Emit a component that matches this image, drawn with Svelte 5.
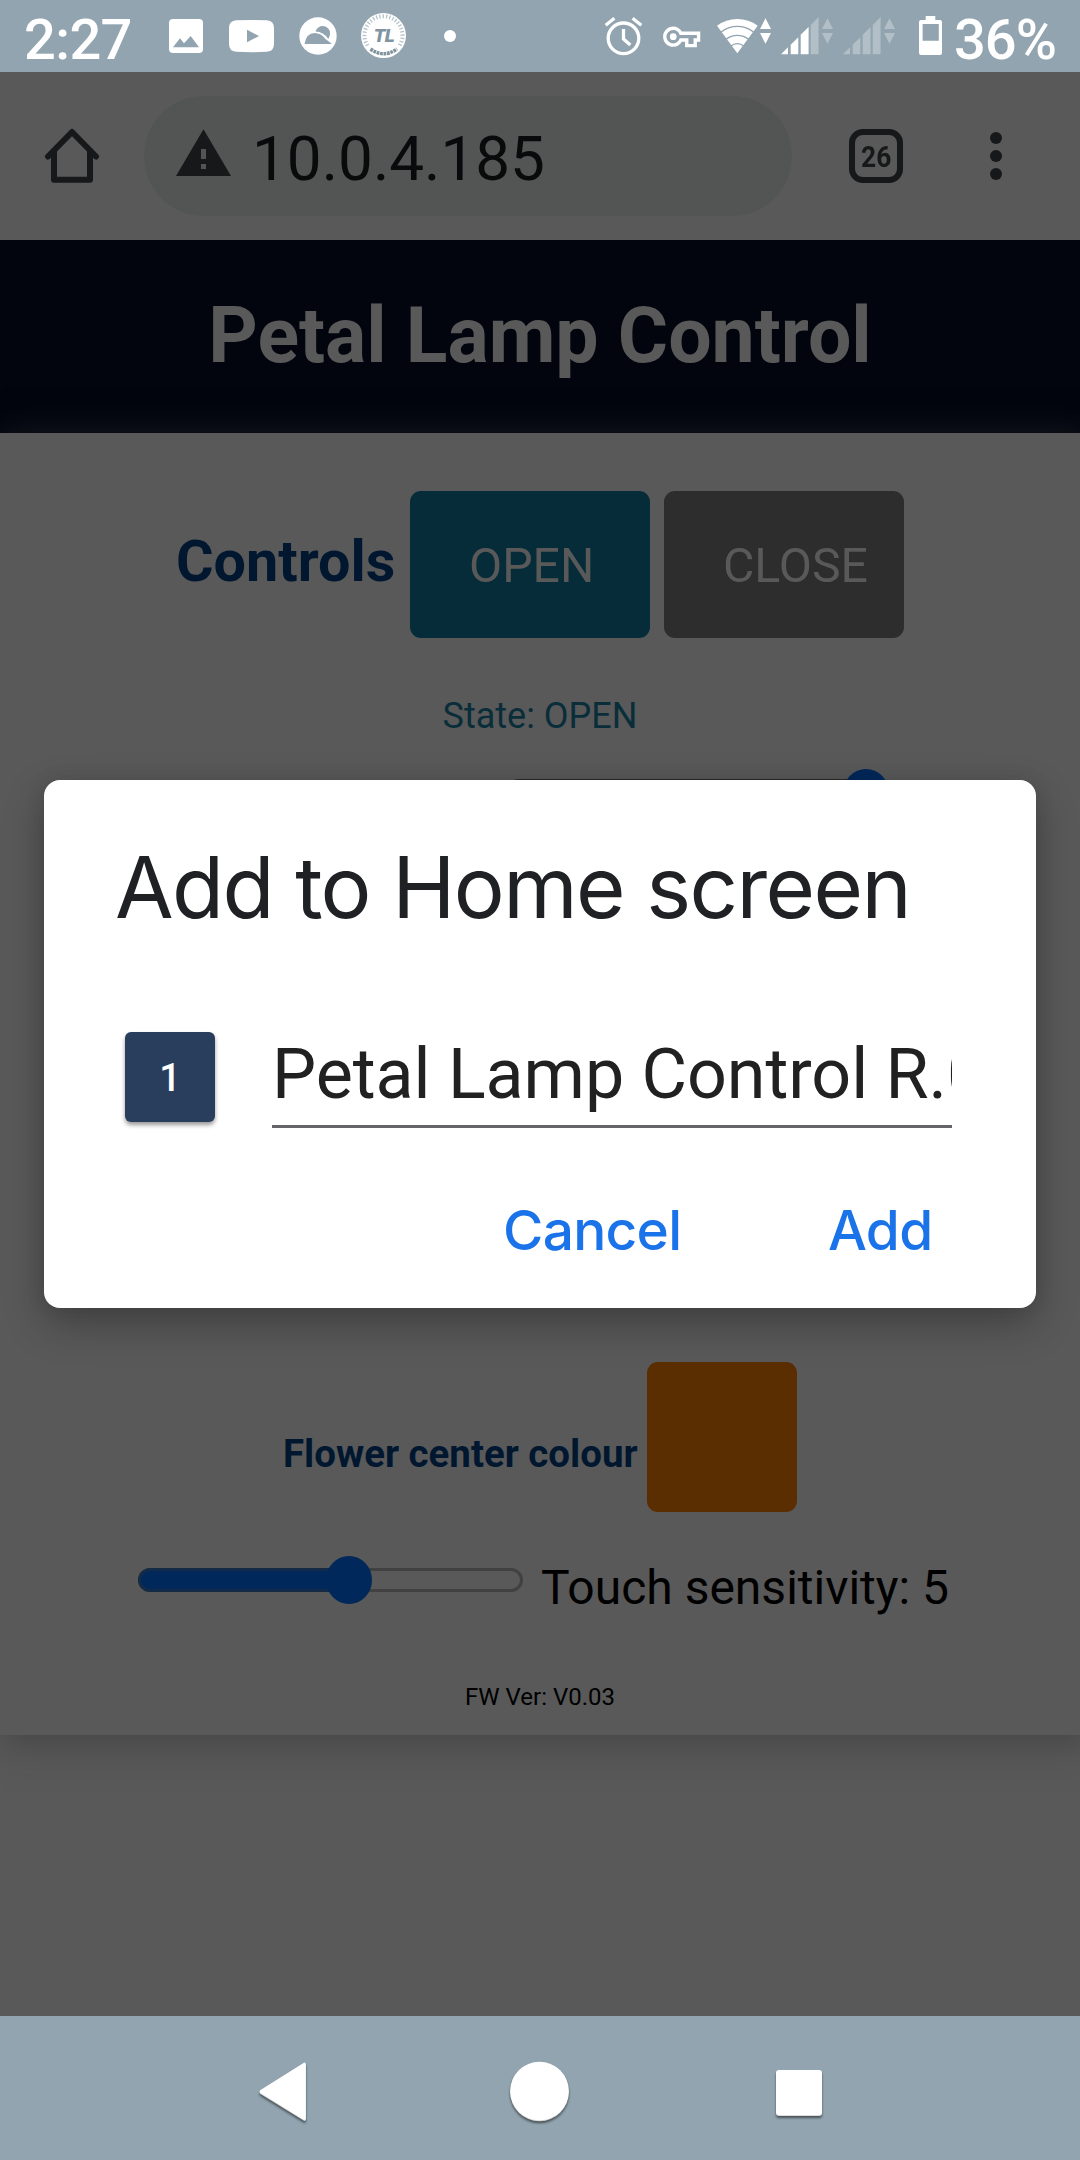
<script>
  const bars = [
    '781,54.3 788,54.3 788,47.3',
    '790.7,54.3 798.3,54.3 798.3,37.2 790.7,44.7',
    '800.7,54.3 808.6,54.3 808.6,27 800.7,34.8',
    '810.7,54.3 818.6,54.3 818.6,17 810.7,24.9'
  ];
  const signals = [3, 0];
  let name = $state('Petal Lamp Control R.0');
</script>

<div class="screen">
  <header class="status">
    <span class="clock">2:27</span>
    <svg class="left-icons" width="300" height="72" viewBox="160 0 300 72" fill="#fff">
      <rect x="169" y="19" width="34" height="34" rx="4" />
      <path class="cut" d="M173 47.3l7-9 4 5 6.700-7.300 8.300 11.300z" />
      <path d="M236 20.300q15.500-.8 31 0 7 .5 7 8v15.500q0 7.500-7 8-15.500.8-31 0-7-.5-7-8V28.300q0-7.500 7-8z" />
      <path class="cut" d="M247 29.700v12.600l12-6.300z" />
      <circle cx="318" cy="36" r="18.700" />
      <path class="cut" d="M304.500 44q2-11 10-11 7 0 11 6l6.500 5z" />
      <path class="cut" d="M315.500 31.500q2-5.500 7.500-5.500 7 1 7 7.500 0 3-1.700 5.500-5-7.500-12.800-7.500z" />
      <circle cx="383.500" cy="35.600" r="22.500" />
      <path d="M367.500 45.500a19 19 0 1 1 32 0" fill="none" class="ticks" />
      <path d="M370.500 49q13 9.500 26.500 0" fill="none" class="beads" />
      <text x="384" y="42" text-anchor="middle" class="tl">TL</text>
      <circle cx="450" cy="36" r="6" />
    </svg>
    <svg class="right-icons" width="350" height="72" viewBox="600 0 350 72" fill="#fff">
      <g fill="none" stroke="#fff" stroke-width="3.300">
        <circle cx="623.500" cy="38.300" r="15.300" />
        <path d="M605.700 25.200l8.700-6.900M632.600 18.300l8.700 6.900M623.500 29v10l6.800 6" />
      </g>
      <g transform="translate(661.400 16.400) scale(1.690)">
        <path fill-rule="evenodd" d="M12.100 9C11.100 7.200 9.200 6 7 6c-3.300 0-6 2.700-6 6s2.700 6 6 6c2.200 0 4.100-1.200 5.100-3H14v3.300h7V15h2V9zM21 13h-2v3.300h-3V13h-5.200c-.4 1.700-1.900 3-3.800 3s-4-1.800-4-4 1.800-4 4-4c1.900 0 3.400 1.300 3.800 3H21z" />
        <circle cx="7" cy="12" r="2" />
      </g>
      <path d="M737.300 53.300L717 25.700a34.300 34.300 0 0 1 40.700 0z" />
      <g class="rings">
        <path d="M720.800 32.200a26.600 26.600 0 0 1 33 0" />
        <path d="M726 39.300a18 18 0 0 1 22.600 0" />
        <path d="M731 46a9.600 9.600 0 0 1 12.600 0" />
      </g>
      <path d="M765.500 18.300l5.500 10.700h-11zM760 33h11l-5.500 10.700z" />
      {#each signals as level, s}
        <g transform="translate({s * 62} 0)">
          {#each bars as points, i}
            <polygon {points} class:dim={i >= level} />
          {/each}
          <path class="dim" d="M827.500 18.300l5.500 10.700h-11zM822 33h11l-5.500 10.700z" />
        </g>
      {/each}
      <path fill-rule="evenodd" d="M925.700 16h9.600v4h4.700q2 0 2 2v31q0 2-2 2h-19q-2 0-2-2V22q0-2 2-2h4.700zM922.600 24v16.700h16.200V24z" />
    </svg>
    <span class="battery">36%</span>
  </header>

  <div class="toolbar">
    <svg class="home" width="56" height="56" viewBox="44 128 56 56" fill="none" stroke="#161819" stroke-width="6">
      <path stroke-linecap="round" stroke-linejoin="round" d="M48 156.500l24-24.500 24 24.500M54 151v28.700h36V151" />
    </svg>
    <div class="omnibox">
      <svg width="56" height="48" viewBox="176 129 56 48">
        <path fill="#161819" fill-rule="evenodd" d="M203.500 129.300L231 176h-55zM201 149v10h5v-10zM201 164v5h5v-5z" />
      </svg>
      <span>10.0.4.185</span>
    </div>
    <div class="tabs"><span>26</span></div>
    <svg class="more" width="12" height="48" viewBox="0 0 12 48" fill="#161819">
      <circle cx="6" cy="6" r="6" /><circle cx="6" cy="24" r="6" /><circle cx="6" cy="42" r="6" />
    </svg>
  </div>

  <div class="title-bar"><h1>Petal Lamp Control</h1></div>

  <main class="card">
    <div class="controls">
      <h2>Controls</h2>
      <button class="open">OPEN</button>
      <button class="close">CLOSE</button>
    </div>
    <p class="state">State: OPEN</p>
    <div class="lamp-slider"><i></i></div>
    <div class="colour-row">
      <h3>Flower center colour</h3>
      <div class="swatch"></div>
    </div>
    <div class="touch-row">
      <div class="slider"><div class="fill"></div><i></i></div>
      <span>Touch sensitivity: 5</span>
    </div>
    <p class="fw">FW Ver: V0.03</p>
  </main>

  <nav class="navbar">
    <svg width="1080" height="144" viewBox="0 2016 1080 144">
      <g class="nav-icons">
        <path d="M303.500 2063q2.300-1.300 2.300 1.500v53.500q0 2.800-2.300 1.500l-43-26.500q-2-1.500 0-3z" />
        <circle cx="539.500" cy="2091" r="29.300" />
        <rect x="776" y="2070" width="46" height="45" rx="3" />
      </g>
    </svg>
  </nav>

  <section class="dialog">
    <h4>Add to Home screen</h4>
    <div class="entry">
      <div class="app-icon">1</div>
      <div class="field"><span>{name}</span></div>
    </div>
    <div class="actions">
      <button class="cancel">Cancel</button>
      <button class="add">Add</button>
    </div>
  </section>
</div>

<style>
  :global(body) { margin: 0; background: #595959; }
  .screen {
    position: relative;
    width: 1080px;
    height: 2160px;
    overflow: hidden;
    display: flex;
    flex-direction: column;
    background: #595959;
    font-family: Roboto, sans-serif;
  }
  h1, h2, h3, h4, p { margin: 0; }
  button { border: 0; background: none; font-family: inherit; padding: 0; text-align: left; }
  svg { display: block; flex: none; }

  .status {
    height: 72px;
    flex: none;
    display: flex;
    background: #91a4af;
    color: #fff;
    font-size: 56px;
    font-weight: 500;
    line-height: 80px;
    white-space: nowrap;
  }
  .clock { width: 136px; padding-left: 24px; letter-spacing: -.6px; }
  .left-icons { margin-right: 140px; }
  .battery { margin-left: 4px; letter-spacing: -1px; }
  .cut { fill: #91a4af; }
  .ticks { stroke: #b5c2c9; stroke-width: 4; stroke-dasharray: 1.300 2; }
  .beads { stroke: #7f949f; stroke-width: 3.500; stroke-dasharray: 2.800 .7; }
  .tl { font: italic 900 19px Roboto, sans-serif; fill: #7f949f; letter-spacing: -.5px; }
  .rings { fill: none; stroke: #91a4af; stroke-width: 1.300; }
  .dim { opacity: .3; }

  .toolbar { height: 168px; flex: none; display: flex; align-items: center; }
  .home { margin-left: 44px; }
  .omnibox {
    width: 648px;
    height: 120px;
    margin-left: 44px;
    border-radius: 60px;
    background: #525553;
    display: flex;
    align-items: center;
    box-sizing: border-box;
    padding-left: 32px;
    color: #090a0b;
    font-size: 62px;
    line-height: 62px;
  }
  .omnibox svg { margin-top: -7px; }
  .omnibox span { margin-left: 20px; padding-top: 6px; }
  .tabs {
    box-sizing: border-box;
    width: 54px;
    height: 54px;
    margin-left: 57px;
    border: 6px solid #161819;
    border-radius: 14px;
    display: flex;
    align-items: center;
    justify-content: center;
    color: #161819;
    font-size: 30px;
    font-weight: 700;
  }
  .tabs span { transform: scaleX(.88); }
  .more { margin-left: 87px; }

  .title-bar {
    height: 193px;
    flex: none;
    background: #02050e;
    color: #595959;
    text-align: center;
  }
  h1 { font-size: 77px; line-height: 192px; font-weight: 700; }

  .card {
    height: 1302px;
    flex: none;
    box-sizing: border-box;
    padding-top: 58px;
    background: #595959;
    box-shadow: 6px 6px 33px 3px rgba(49, 49, 49, .5);
    display: flex;
    flex-direction: column;
  }
  .controls { display: flex; align-items: center; margin-left: 176px; }
  h2 { width: 234px; padding-bottom: 6px; font-size: 57.500px; line-height: 70px; font-weight: 700; color: #00172f; white-space: nowrap; }
  .controls button {
    width: 240px;
    height: 147px;
    padding-left: 59px;
    border-radius: 11px;
    background: #062c39;
    color: #595959;
    font-size: 48.200px;
    line-height: 149px;
    white-space: nowrap;
  }
  .controls .close { margin-left: 14px; background: #2d2d2d; }
  .state { margin-top: 53px; text-align: center; font-size: 36px; line-height: 50px; color: #0a2d3a; }
  .lamp-slider {
    width: 384px;
    height: 28px;
    margin: 38px 0 0 505px;
    border-radius: 14px;
    background: #2a2a2a;
    display: flex;
    align-items: center;
    justify-content: flex-end;
  }
  i { width: 46px; height: 48px; flex: none; border-radius: 50%; background: #00285a; }

  .colour-row { display: flex; margin: 555px 0 0 283px; }
  h3 { width: 364px; padding-top: 68px; font-size: 38.450px; line-height: 48px; font-weight: 700; color: #00172f; white-space: nowrap; }
  .swatch { width: 150px; height: 150px; border-radius: 11px; background: #5a2e00; }

  .touch-row { display: flex; align-items: center; height: 60px; margin: 38px 0 0 138px; color: #000; font-size: 48px; line-height: 60px; }
  .touch-row span { margin-left: 18px; padding-top: 15px; white-space: nowrap; }
  .slider {
    box-sizing: border-box;
    width: 385px;
    height: 24px;
    border: 3px solid #414141;
    border-radius: 12px;
    display: flex;
    align-items: center;
  }
  .fill { box-sizing: border-box; width: 211px; height: 24px; border: 3px solid #142b47; border-radius: 12px 0 0 12px; margin: -3px -23px -3px -3px; background: #00285a; }
  .fw { margin-top: 71px; text-align: center; font-size: 24px; line-height: 32px; color: #000; }

  .navbar { height: 144px; margin-top: auto; background: #91a4af; }
  .nav-icons {
    fill: #fff;
    filter: drop-shadow(0 1.500px 0 #dcdcdc) drop-shadow(0 2px 1px rgba(0, 0, 0, .5));
  }

  .dialog {
    position: absolute;
    left: 44px;
    top: 780px;
    width: 992px;
    height: 528px;
    border-radius: 16px;
    background: #fff;
    box-shadow: 0 16px 40px rgba(0, 0, 0, .28), 0 0 20px rgba(0, 0, 0, .08);
  }
  h4 {
    padding: 58px 0 0 71px;
    font: 400 85px/100px Inter, sans-serif;
    letter-spacing: -1.600px;
    color: #202124;
    white-space: nowrap;
  }
  .entry { display: flex; margin: 74px 0 0 81px; height: 116px; }
  .app-icon {
    width: 90px;
    height: 90px;
    margin-top: 20px;
    border-radius: 6px;
    background: #293d5c;
    box-shadow: 0 3px 4px rgba(0, 0, 0, .4);
    color: #fff;
    text-align: center;
    font-size: 38px;
    font-weight: 500;
    line-height: 93px;
  }
  .field {
    box-sizing: border-box;
    width: 680px;
    height: 116px;
    margin-left: 57px;
    border-bottom: 3px solid #66666a;
    overflow: hidden;
    white-space: nowrap;
    font-size: 70px;
    letter-spacing: -.05px;
    line-height: 125px;
    color: #212121;
  }
  .actions { display: flex; margin-top: 47px; color: #1a73e8; }
  .actions button { color: inherit; font: 500 55px/110px Inter, sans-serif; letter-spacing: -.700px; }
  .cancel { width: 325px; margin-left: 459px; }
</style>
